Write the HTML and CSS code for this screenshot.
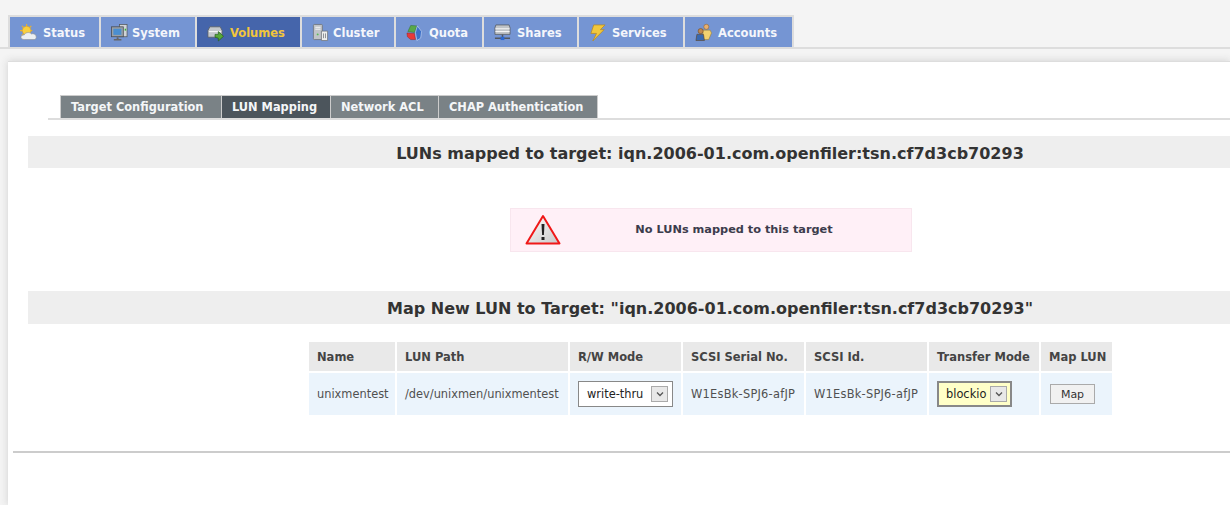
FILE: index.html
```html
<!DOCTYPE html>
<html lang="en">
<head>
<meta charset="utf-8">
<title>LUN Mapping</title>
<link rel="stylesheet" href="styles.css">
</head>
<body>
<nav class="topbar">
  <ul class="tabs">
    <li class="tab"><svg class="ico" viewBox="0 0 18 18"><g stroke="#e8b030" stroke-width="1.200"><path d="M7 0v13M0 7h13M2 2l10 10M12 2L2 12"/></g><circle cx="7" cy="7" r="4.500" fill="#f8d040" stroke="#e0a020" stroke-width=".6"/><path d="M5 16.500c-2.500 0-4-1-4-2.500s1.500-2.500 3.500-2.500c1-2.500 5.500-3.500 7.500-1 2.500-.8 4.500.5 5 2 .8 2.500-.5 4-2 4z" fill="#eceff2" stroke="#8e9298" stroke-width=".7"/></svg><span>Status</span></li>
    <li class="tab tab-near"><svg class="ico" viewBox="0 0 18 18"><rect x="9" y="0.500" width="8" height="13" fill="#d0d4d8" stroke="#54585c" stroke-width=".8"/><rect x="0.500" y="3" width="12.500" height="10.500" fill="#9aa0a6" stroke="#44484e" stroke-width=".8"/><rect x="2.500" y="5" width="8.500" height="6.500" fill="#4a8ed0"/><path d="M6 14h2v2h3v1.500H3V16h3z" fill="#666"/><rect x="14.500" y="5" width="1.500" height="2" fill="#3b3"/></svg><span>System</span></li>
    <li class="tab tab-on"><svg class="ico" viewBox="0 0 18 18"><path d="M3 3h11l2 4v7H1V7z" fill="#c4c8cc" stroke="#585c60" stroke-width=".8"/><path d="M2 8h13" stroke="#f4f4f4" stroke-width="1.200"/><path d="M8.500 14v-3h3.500V8l5.500 5-5.500 5v-3z" fill="#58a838" stroke="#205c18" stroke-width=".7"/></svg><span>Volumes</span></li>
    <li class="tab tab-near"><svg class="ico" viewBox="0 0 18 18"><rect x="1.500" y="0.500" width="9.500" height="16" rx="1" fill="#c0c4c8" stroke="#6c7074" stroke-width=".8"/><path d="M3.500 3.500h5.500M3.500 5.500h5.500" stroke="#f4f4f4"/><circle cx="6" cy="11" r="1" fill="#5b5"/><path d="M10 7.500h6.500v10H10z" fill="#eee" stroke="#70747a" stroke-width=".8"/><path d="M12.200 10v5M14.300 10v5" stroke="#70747a" stroke-width=".8"/></svg><span>Cluster</span></li>
    <li class="tab"><svg class="ico" viewBox="0 0 18 18"><path d="M2 8l3-6.500L11.500 2 9 9z" fill="#58a848" stroke="#2c6c28" stroke-width=".5"/><path d="M1 9.500l8 .5 1 6.500H5l-3.500-3z" fill="#e83838" stroke="#902020" stroke-width=".5"/><path d="M12 2l4.500 6-1 7-4 2.500L10 9z" fill="#3c70c8" stroke="#e8f0ff" stroke-width=".5"/></svg><span>Quota</span></li>
    <li class="tab"><svg class="ico" viewBox="0 0 18 18"><path d="M2 1h14l1 3v7H1V4z" fill="#c0c4c8" stroke="#54585e" stroke-width=".8"/><path d="M1.500 5h15M1.500 8h15" stroke="#f4f4f4" stroke-width="1.200"/><path d="M9 11v3M1 15h16" stroke="#54585e" stroke-width="1.600"/><rect x="7" y="13.500" width="4" height="3.500" fill="#2c68d0"/></svg><span>Shares</span></li>
    <li class="tab"><svg class="ico" viewBox="0 0 18 18"><path d="M5 1h12l-5 5h4L4 18l4-8H2z" fill="#f2c83c" stroke="#b88a20" stroke-width=".8"/></svg><span>Services</span></li>
    <li class="tab"><svg class="ico" viewBox="0 0 18 18"><circle cx="12" cy="3" r="2.700" fill="#e8b070" stroke="#90602c" stroke-width=".6"/><path d="M8 6.500h8l1.500 3-3 7H9z" fill="#f0d070" stroke="#a08030" stroke-width=".6"/><circle cx="6" cy="7.500" r="2.700" fill="#c08850" stroke="#704820" stroke-width=".6"/><path d="M2 11h7l1 6.500H1z" fill="#3868b0" stroke="#604018" stroke-width=".6"/></svg><span>Accounts</span></li>
  </ul>
</nav>
<main class="panel">
  <div class="subnav">
    <a class="subtab">Target Configuration</a><a class="subtab subtab-on">LUN Mapping</a><a class="subtab">Network ACL</a><a class="subtab">CHAP Authentication</a>
  </div>
  <h2 class="band band-first">LUNs mapped to target: iqn.2006-01.com.openfiler:tsn.cf7d3cb70293</h2>
  <div class="notice">
    <svg class="warn" viewBox="0 0 36 31"><defs><linearGradient id="wg" x1="0" y1="0" x2="1" y2="1"><stop offset="0" stop-color="#fff"/><stop offset="1" stop-color="#c8c8c8"/></linearGradient></defs><path d="M18 2 L34.500 29.500 H1.500 Z" fill="url(#wg)" stroke="#f01818" stroke-width="2" stroke-linejoin="round"/><path d="M16.500 10h3l-.6 11h-1.800z" fill="#222"/><rect x="16.500" y="23" width="3" height="3" fill="#222"/></svg>
    <strong>No LUNs mapped to this target</strong>
  </div>
  <h2 class="band band-second">Map New LUN to Target: "iqn.2006-01.com.openfiler:tsn.cf7d3cb70293"</h2>
  <table class="luns">
    <thead>
      <tr><th>Name</th><th>LUN Path</th><th>R/W Mode</th><th>SCSI Serial No.</th><th>SCSI Id.</th><th>Transfer Mode</th><th>Map LUN</th></tr>
    </thead>
    <tbody>
      <tr>
        <td>unixmentest</td>
        <td>/dev/unixmen/unixmentest</td>
        <td><span class="sel"><span class="sel-text">write-thru</span><span class="sel-btn"><svg viewBox="0 0 8 6"><path d="M1 1.500l3 3 3-3" fill="none" stroke="#555" stroke-width="1.300"/></svg></span></span></td>
        <td class="serial">W1EsBk-SPJ6-afJP</td>
        <td class="serial">W1EsBk-SPJ6-afJP</td>
        <td><span class="sel sel-focus"><span class="sel-text">blockio</span><span class="sel-btn"><svg viewBox="0 0 8 6"><path d="M1 1.500l3 3 3-3" fill="none" stroke="#555" stroke-width="1.300"/></svg></span></span></td>
        <td class="cell-btn"><button class="map" type="button">Map</button></td>
      </tr>
    </tbody>
  </table>
  <hr class="rule">
</main>
</body>
</html>
```
FILE: styles.css
```css
* { box-sizing: border-box; }
html, body { margin: 0; height: 505px; overflow: hidden; }
body {
  background: #f4f4f4;
  font-family: "DejaVu Sans", Verdana, sans-serif;
  font-size: 11px;
  color: #444;
}
.topbar {
  height: 49px;
  padding: 15px 0 0 8px;
  border-bottom: 2px solid #ddd;
}
.tabs {
  display: inline-grid;
  grid-template-columns: 89px 94px 103px 92px 86px 93px 104px 107px;
  gap: 2px;
  margin: 0;
  padding: 2px 2px 0;
  list-style: none;
  background: #ddd;
  height: 32px;
}
.tab {
  display: flex;
  align-items: center;
  height: 30px;
  padding: 1px 0 0 10px;
  background: #7595d3;
  color: #f4f6fb;
  font-weight: bold;
  font-size: 11.500px;
}
.tab-on { background: #4565ab; color: #f2c63c; }
.ico { width: 17px; height: 17px; margin-right: 6px; flex: none; overflow: visible; }
.tab-near .ico { margin-right: 4px; }
.panel {
  height: 444px;
  margin: 12px 0 0 8px;
  background: #fff;
  box-shadow: 0 0 8px #cfcfcf;
  border-top: 1px solid #ddd;
  padding-top: 33px;
  overflow: hidden;
}
.subnav {
  display: grid;
  grid-template-columns: 162px 109px 108px 159px;
  height: 25px;
  margin-left: 40px;
  padding-left: 12px;
  border-bottom: 2px solid #ddd;
}
.subtab {
  display: block;
  height: 23px;
  line-height: 23px;
  padding-left: 10px;
  background: #7a8286;
  color: #f4f6f8;
  font-weight: bold;
  font-size: 11.400px;
  border: 1px solid #ccc;
  border-width: 1px 1px 0 0;
}
.subtab:first-child { border-left: 1px solid #ccc; }
.subtab-on { background: #4c555c; }
.band {
  height: 32px;
  margin: 0 0 0 20px;
  background: #eee;
  color: #333;
  font-size: 16px;
  line-height: 35px;
  font-weight: bold;
  text-align: center;
  padding-left: 162px;
}
.band-first { margin-top: 16px; }
.notice {
  display: flex;
  align-items: center;
  width: 402px;
  height: 44px;
  margin: 40px 0 0 502px;
  padding: 0 0 2px 14px;
  background: #fff0f7;
  border: 1px solid #f8e6ee;
  color: #3c3c4c;
}
.notice strong { font-size: 11.300px; flex: 1; text-align: center; padding-right: 4px; }
.warn { width: 36px; height: 31px; flex: none; }
.band-second { margin-top: 39px; height: 33px; line-height: 35px; }
.luns {
  table-layout: fixed;
  width: 807px;
  border-collapse: separate;
  border-spacing: 2px 2px;
  margin: 16px 0 0 299px;
  font-size: 11.400px;
}
.luns th:nth-child(1) { width: 86px; }
.luns th:nth-child(2) { width: 171px; }
.luns th:nth-child(3) { width: 111px; }
.luns th:nth-child(4) { width: 121px; }
.luns th:nth-child(5) { width: 121px; }
.luns th:nth-child(6) { width: 110px; }
.luns th:nth-child(7) { width: 71px; }
.luns th {
  background: #e9e9e9;
  color: #444;
  height: 29px;
  padding: 0 8px;
  text-align: left;
  font-weight: bold;
  font-size: 11.500px;
  white-space: nowrap;
}
.luns td {
  background: #ebf4fc;
  height: 42px;
  padding: 0 8px;
  color: #505050;
  white-space: nowrap;
}
.luns .serial { letter-spacing: .25px; }
.sel {
  display: inline-flex;
  align-items: center;
  height: 26px;
  width: 95px;
  padding: 0 4px 0 8px;
  background: #fff;
  border: 1px solid #888;
  color: #222;
  vertical-align: middle;
}
.sel-text { flex: 1; }
.sel-btn {
  display: flex;
  align-items: center;
  justify-content: center;
  width: 17px;
  height: 16px;
  border: 1px solid #aaa;
  background: #e8e8e8;
}
.sel-btn svg { width: 8px; height: 6px; }
.sel-focus { width: 75px; padding: 0 3px 0 7px; background: #ffffc8; border: 2px solid #888; }
.luns .cell-btn { padding-left: 9px; }
.map {
  width: 45px;
  height: 20px;
  padding: 0;
  background: #f1f1f1;
  border: 1px solid #aaa;
  color: #333;
  font-family: inherit;
  font-size: 11px;
}
.rule {
  height: 2px;
  margin: 34px 0 0 5px;
  border: 0;
  background: #ccc;
}
```
